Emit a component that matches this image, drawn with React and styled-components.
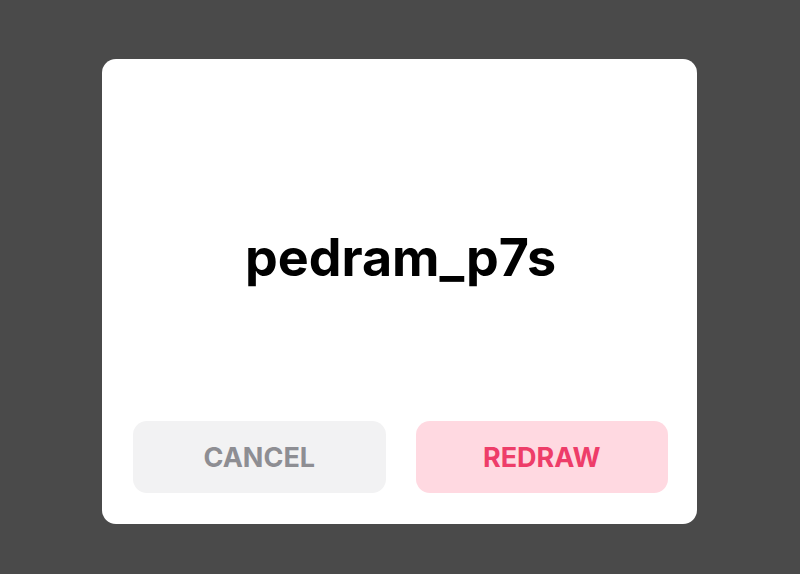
import React from "react";
import styled, { createGlobalStyle } from "styled-components";

const Global = createGlobalStyle`
  html, body { margin: 0; padding: 0; }
  body {
    background: #4a4a4a;
    font-family: Inter, "Noto Sans", "Liberation Sans", sans-serif;
  }
`;

const Screen = styled.div`
  width: 800px;
  height: 574px;
  box-sizing: border-box;
  padding: 59px 103px 50px 102px;
  display: flex;
  align-items: flex-start;
`;

const Dialog = styled.div`
  width: 595px;
  height: 465px;
  box-sizing: border-box;
  background: #ffffff;
  border-radius: 14px;
  padding: 0 29px 31px 31px;
  display: flex;
  flex-direction: column;
`;

const Body = styled.div`
  flex: 1;
  display: flex;
  align-items: center;
  justify-content: center;
  padding-top: 36px;
`;

const Title = styled.h1`
  margin: 0;
  font-size: 52px;
  line-height: 1;
  font-weight: 700;
  color: #000;
  letter-spacing: 0;
`;

const Actions = styled.div`
  display: grid;
  grid-template-columns: 1fr 1fr;
  gap: 30px;
`;

const Button = styled.button`
  height: 72px;
  border: none;
  border-radius: 14px;
  background: ${(p) => (p.$primary ? "#ffd9e1" : "#f2f2f3")};
  color: ${(p) => (p.$primary ? "#ee3d69" : "#8e8e93")};
  font-family: inherit;
  font-size: 27px;
  font-weight: 700;
  text-transform: uppercase;
  cursor: pointer;
`;

export default function App() {
  return (
    <>
      <Global />
      <Screen>
        <Dialog>
          <Body>
            <Title>pedram_p7s</Title>
          </Body>
          <Actions>
            <Button>Cancel</Button>
            <Button $primary>Redraw</Button>
          </Actions>
        </Dialog>
      </Screen>
    </>
  );
}
